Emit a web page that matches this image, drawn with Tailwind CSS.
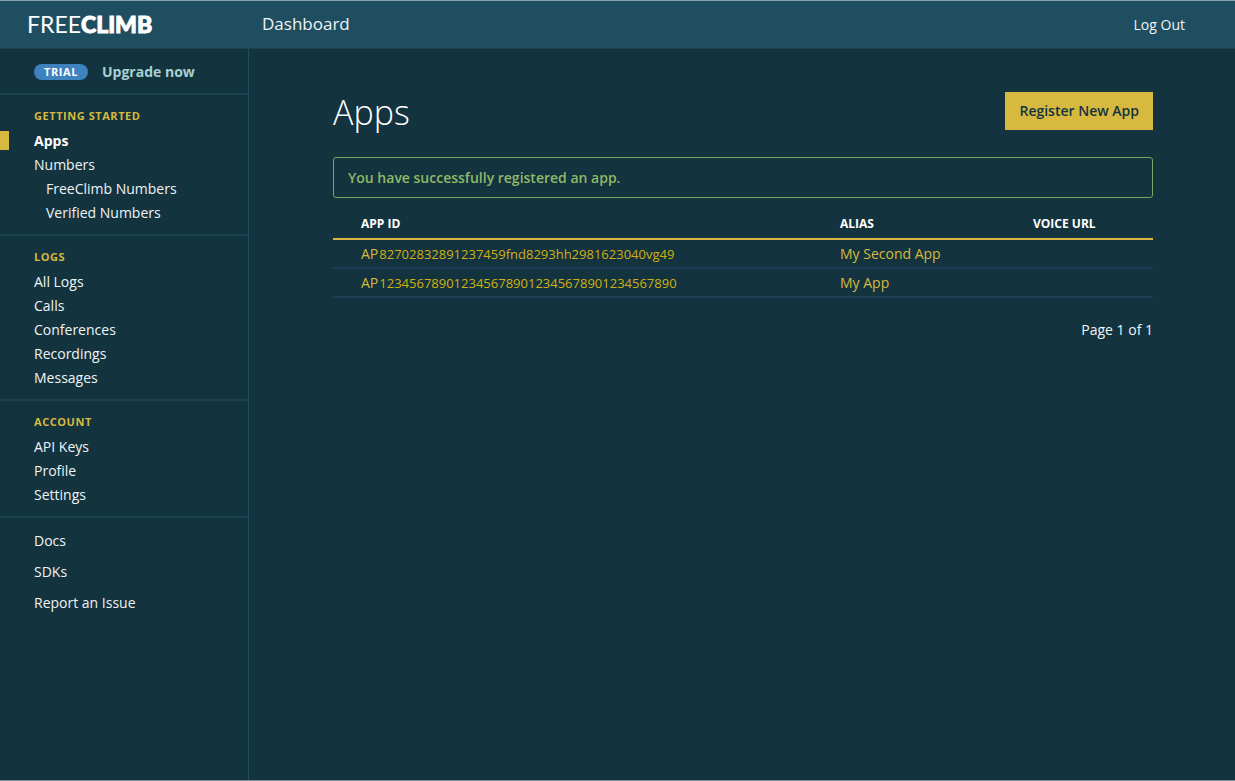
<!DOCTYPE html>
<html lang="en">
<head>
    <meta charset="UTF-8">
    <meta name="viewport" content="width=device-width, initial-scale=1.0">
    <title>FreeClimb Dashboard</title>
    <script src="https://cdn.jsdelivr.net/npm/@tailwindcss/browser@4"></script>
</head>
<body class="min-h-screen flex flex-col bg-[#13333f] border-b border-[#7f929b] font-['Open_Sans',sans-serif] text-sm text-[#f0f4f5]">

    <!-- Top bar -->
    <header class="h-[49px] shrink-0 flex items-center bg-[#1f4e61] border-t border-t-[#8aa2ac] border-b border-b-[#1b4353]">
        <a href="#" class="w-[262px] pl-[27px] pb-px flex items-center text-white font-['Lato',sans-serif] text-[23px] leading-6" aria-label="FreeClimb home">
            <span>FREE</span><span class="font-black [-webkit-text-stroke:1px_white]">CLIMB</span>
        </a>
        <span class="text-[17px]">Dashboard</span>
        <a href="#" class="ml-auto mr-[50px]">Log Out</a>
    </header>

    <div class="flex flex-1">
        <!-- Sidebar -->
        <nav class="w-[249px] shrink-0 border-r border-[#1f4e61]">
            <div class="h-[46px] pt-[2px] flex items-center gap-[14px] pl-[34px] border-b-2 border-[#1a4152]">
                <span class="w-[54px] h-4 rounded-full bg-[#3f82c0] text-center text-[11px] leading-4 font-bold tracking-wider text-white">TRIAL</span>
                <a href="#" class="font-bold text-[#a9d0d2]">Upgrade now</a>
            </div>

            <section class="pt-[11px] pb-[9px] pl-[34px] border-b-2 border-[#1a4152]">
                <h2 class="mb-[3px] text-[11px] leading-5 font-bold tracking-wider text-[#d7b940]">GETTING STARTED</h2>
                <ul class="leading-6">
                    <li class="relative">
                        <span class="absolute -left-[34px] top-[2px] w-[9px] h-[19px] bg-[#d7b940]"></span>
                        <a href="#" class="font-bold text-white">Apps</a>
                    </li>
                    <li><a href="#">Numbers</a></li>
                    <li class="pl-3"><a href="#">FreeClimb Numbers</a></li>
                    <li class="pl-3"><a href="#">Verified Numbers</a></li>
                </ul>
            </section>

            <section class="pt-[11px] pb-[9px] pl-[34px] border-b-2 border-[#1a4152]">
                <h2 class="mb-[3px] text-[11px] leading-5 font-bold tracking-wider text-[#d7b940]">LOGS</h2>
                <ul class="leading-6">
                    <li><a href="#">All Logs</a></li>
                    <li><a href="#">Calls</a></li>
                    <li><a href="#">Conferences</a></li>
                    <li><a href="#">Recordings</a></li>
                    <li><a href="#">Messages</a></li>
                </ul>
            </section>

            <section class="pt-[11px] pb-[9px] pl-[34px] border-b-2 border-[#1a4152]">
                <h2 class="mb-[3px] text-[11px] leading-5 font-bold tracking-wider text-[#d7b940]">ACCOUNT</h2>
                <ul class="leading-6">
                    <li><a href="#">API Keys</a></li>
                    <li><a href="#">Profile</a></li>
                    <li><a href="#">Settings</a></li>
                </ul>
            </section>

            <ul class="pt-[7px] pl-[34px] leading-[31px]">
                <li><a href="#">Docs</a></li>
                <li><a href="#">SDKs</a></li>
                <li><a href="#">Report an Issue</a></li>
            </ul>
        </nav>

        <!-- Content -->
        <main class="flex-1 pt-[43px] pl-[84px] pr-[82px]">
            <div class="flex items-start justify-between">
                <h1 class="text-[34px] leading-10 font-light text-white">Apps</h1>
                <button class="h-[38px] px-[14px] bg-[#d7b940] font-semibold text-[#13333f]">Register New App</button>
            </div>

            <div role="status" class="mt-[25px] h-[41px] px-[14px] flex items-center border border-[#7ea463] rounded-[3px] font-semibold text-[#8fb868]">
                You have successfully registered an app.
            </div>

            <table class="mt-3 w-full table-fixed border-collapse text-left">
                <thead>
                    <tr class="h-[29px] border-b-2 border-[#d7b940] text-xs text-white">
                        <th class="pl-7 font-bold">APP ID</th>
                        <th class="w-[193px] font-bold">ALIAS</th>
                        <th class="w-[120px] font-bold">VOICE URL</th>
                    </tr>
                </thead>
                <tbody class="text-[#d7b940]">
                    <tr class="h-[29px] border-b-2 border-[#1a3f52]">
                        <td class="pl-7"><a href="#">AP<span class="ml-px text-[13px] text-[#d0b012]">82702832891237459fnd8293hh2981623040vg49</span></a></td>
                        <td><a href="#">My Second App</a></td>
                        <td></td>
                    </tr>
                    <tr class="h-[29px] border-b-2 border-[#1a3f52]">
                        <td class="pl-7"><a href="#">AP<span class="ml-px text-[13px] text-[#d0b012]">1234567890123456789012345678901234567890</span></a></td>
                        <td><a href="#">My App</a></td>
                        <td></td>
                    </tr>
                </tbody>
            </table>

            <p class="mt-[22px] text-right">Page 1 of 1</p>
        </main>
    </div>

</body>
</html>
